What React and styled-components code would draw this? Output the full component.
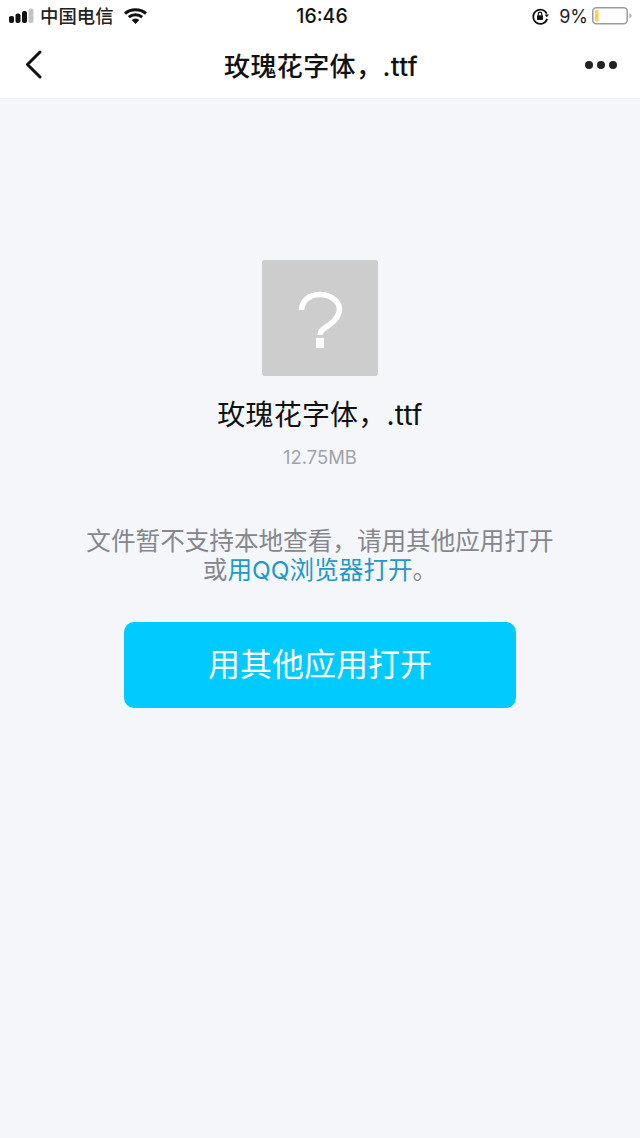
import styled, { createGlobalStyle } from 'styled-components';

const GlobalStyle = createGlobalStyle`
  html, body {
    margin: 0;
    padding: 0;
    background: #f4f6fa;
  }
  body {
    font-family: "Inter", "Noto Sans CJK SC", sans-serif;
  }
`;

const Page = styled.div`
  width: 640px;
  height: 1138px;
  display: flex;
  flex-direction: column;
  overflow: hidden;
  background: #f4f6fa;
`;

const Header = styled.header`
  background: #fff;
  border-bottom: 1px solid #eef0f4;
  height: 99px;
  box-sizing: border-box;
`;

const StatusBar = styled.div`
  height: 32px;
  display: grid;
  grid-template-columns: 1fr auto 1fr;
  align-items: center;
  padding: 0 8px 0 9px;
  color: #111;
`;

const StatusLeft = styled.div`
  display: flex;
  align-items: center;
`;

const StatusRight = styled.div`
  display: flex;
  align-items: center;
  justify-content: flex-end;
`;

const Carrier = styled.span`
  font-size: 18.4px;
  font-weight: 500;
  margin: 0 10px 0 6px;
  line-height: 32px;
  color: #222;
`;

const Time = styled.span`
  margin-left: 3px;
  font-size: 19.5px;
  font-weight: 500;
`;

const Percent = styled.span`
  font-size: 18px;
  margin: 0 4px 0 9px;
  color: #222;
`;

const NavBar = styled.nav`
  height: 65px;
  display: grid;
  grid-template-columns: 1fr auto 1fr;
  align-items: center;
  padding: 0 23px 0 25px;
`;

const NavSide = styled.div`
  display: flex;
  align-items: center;
  justify-content: ${(props) => (props.$end ? 'flex-end' : 'flex-start')};
`;

const NavTitle = styled.h1`
  margin: 0;
  padding-bottom: 1px;
  font-size: 26px;
  font-weight: 500;
  letter-spacing: 0.4px;
  color: #111;
  white-space: nowrap;
`;

const Main = styled.main`
  display: flex;
  flex-direction: column;
  align-items: center;
  padding-top: 161px;
`;

const FileIcon = styled.div`
  width: 116px;
  height: 116px;
  border-radius: 3px;
  background: #cdcdcd;
  display: flex;
  align-items: center;
  justify-content: center;
`;

const FileName = styled.div`
  margin-top: 20px;
  font-size: 28px;
  line-height: 38px;
  letter-spacing: 0.2px;
  color: #111;
  white-space: nowrap;
`;

const FileSize = styled.div`
  margin-top: 12px;
  font-size: 18.4px;
  line-height: 22px;
  color: #a2a3aa;
`;

const Notice = styled.p`
  margin: 59px 0 0;
  font-size: 24.6px;
  line-height: 29px;
  text-align: center;
  color: #85868e;
`;

const NoticeLink = styled.span`
  color: #2299c6;
`;

const OpenButton = styled.button`
  margin-top: 37px;
  width: 392px;
  height: 86px;
  border: 0;
  border-radius: 10px;
  background: #00caff;
  color: #fff;
  font-family: inherit;
  font-size: 32px;
  line-height: 1;
  padding: 0;
`;

const SignalIcon = () => (
  <svg width="25" height="18" viewBox="0 0 25 18">
    <rect x="0" y="9" width="5" height="7" rx="2" fill="#111" />
    <rect x="6.500" y="6.500" width="5" height="9.500" rx="2" fill="#111" />
    <rect x="13" y="4" width="5" height="12" rx="2" fill="#111" />
    <rect x="19.500" y="1.500" width="5" height="14.500" rx="2" fill="#c4c4c4" />
  </svg>
);

const WifiIcon = () => (
  <svg width="23" height="16" viewBox="0 0 23 16" fill="none" stroke="#111">
    <path d="M1 5.500C6.800.500 16.200.500 22 5.500" strokeWidth="3" />
    <path d="M4.800 9.200c3.800-3.200 9.600-3.200 13.400 0" strokeWidth="3" />
    <path d="M8.300 12c2-1.300 4.400-1.300 6.400 0l-3.200 3.500z" fill="#111" strokeWidth="1" />
  </svg>
);

const LockIcon = () => (
  <svg width="19" height="19" viewBox="0 0 20 20" fill="none" stroke="#111">
    <path d="M16.600 7A7.500 7.500 0 1 0 17 12.500" strokeWidth="1.800" />
    <path d="M14.300 7.800h4.700l-2.400 2.900z" fill="#111" stroke="none" />
    <rect x="6.300" y="8.800" width="6.400" height="5" rx="0.800" fill="#111" stroke="none" />
    <path d="M7.700 9V7.300a1.800 1.800 0 0 1 3.600 0V9" strokeWidth="1.300" />
  </svg>
);

const BatteryIcon = () => (
  <svg width="40" height="18" viewBox="0 0 40 18" fill="none">
    <rect x="0.750" y="0.750" width="34.500" height="16" rx="3.500" stroke="#9b9b9b" strokeWidth="1.500" />
    <rect x="3" y="3" width="3.500" height="11.500" rx="1" fill="#f5d547" />
    <path d="M37.500 6.500c1.300.3 2 1.200 2 2.300s-.7 2-2 2.300z" fill="#a8a8a8" />
  </svg>
);

const BackIcon = () => (
  <svg width="18" height="30" viewBox="0 0 18 30" fill="none">
    <path d="M15 2 2.500 14.500 15 27" stroke="#111" strokeWidth="3" strokeLinecap="round" strokeLinejoin="round" />
  </svg>
);

const MoreIcon = () => (
  <svg width="32" height="10" viewBox="0 0 32 10" fill="#222">
    <circle cx="4" cy="5" r="4" />
    <circle cx="16" cy="5" r="4" />
    <circle cx="28" cy="5" r="4" />
  </svg>
);

const QuestionIcon = () => (
  <svg width="46" height="60" viewBox="0 0 46 60" fill="none">
    <path d="M4.500 22C5 12 13 6.500 23 6.500S42.500 13 42.500 21c0 7-4 11-9 15-6 4.500-10.500 6-10.500 11" stroke="#fff" strokeWidth="5.500" />
    <rect x="19" y="50" width="8" height="10" fill="#fff" />
  </svg>
);

const App = () => {
  return (
    <Page>
      <GlobalStyle />
      <Header>
        <StatusBar>
          <StatusLeft>
            <SignalIcon />
            <Carrier>中国电信</Carrier>
            <WifiIcon />
          </StatusLeft>
          <Time>16:46</Time>
          <StatusRight>
            <LockIcon />
            <Percent>9%</Percent>
            <BatteryIcon />
          </StatusRight>
        </StatusBar>
        <NavBar>
          <NavSide>
            <BackIcon />
          </NavSide>
          <NavTitle>玫瑰花字体，.ttf</NavTitle>
          <NavSide $end>
            <MoreIcon />
          </NavSide>
        </NavBar>
      </Header>
      <Main>
        <FileIcon>
          <QuestionIcon />
        </FileIcon>
        <FileName>玫瑰花字体，.ttf</FileName>
        <FileSize>12.75MB</FileSize>
        <Notice>
          文件暂不支持本地查看，请用其他应用打开
          <br />
          或<NoticeLink>用QQ浏览器打开</NoticeLink>。
        </Notice>
        <OpenButton>用其他应用打开</OpenButton>
      </Main>
    </Page>
  );
};

export default App;
